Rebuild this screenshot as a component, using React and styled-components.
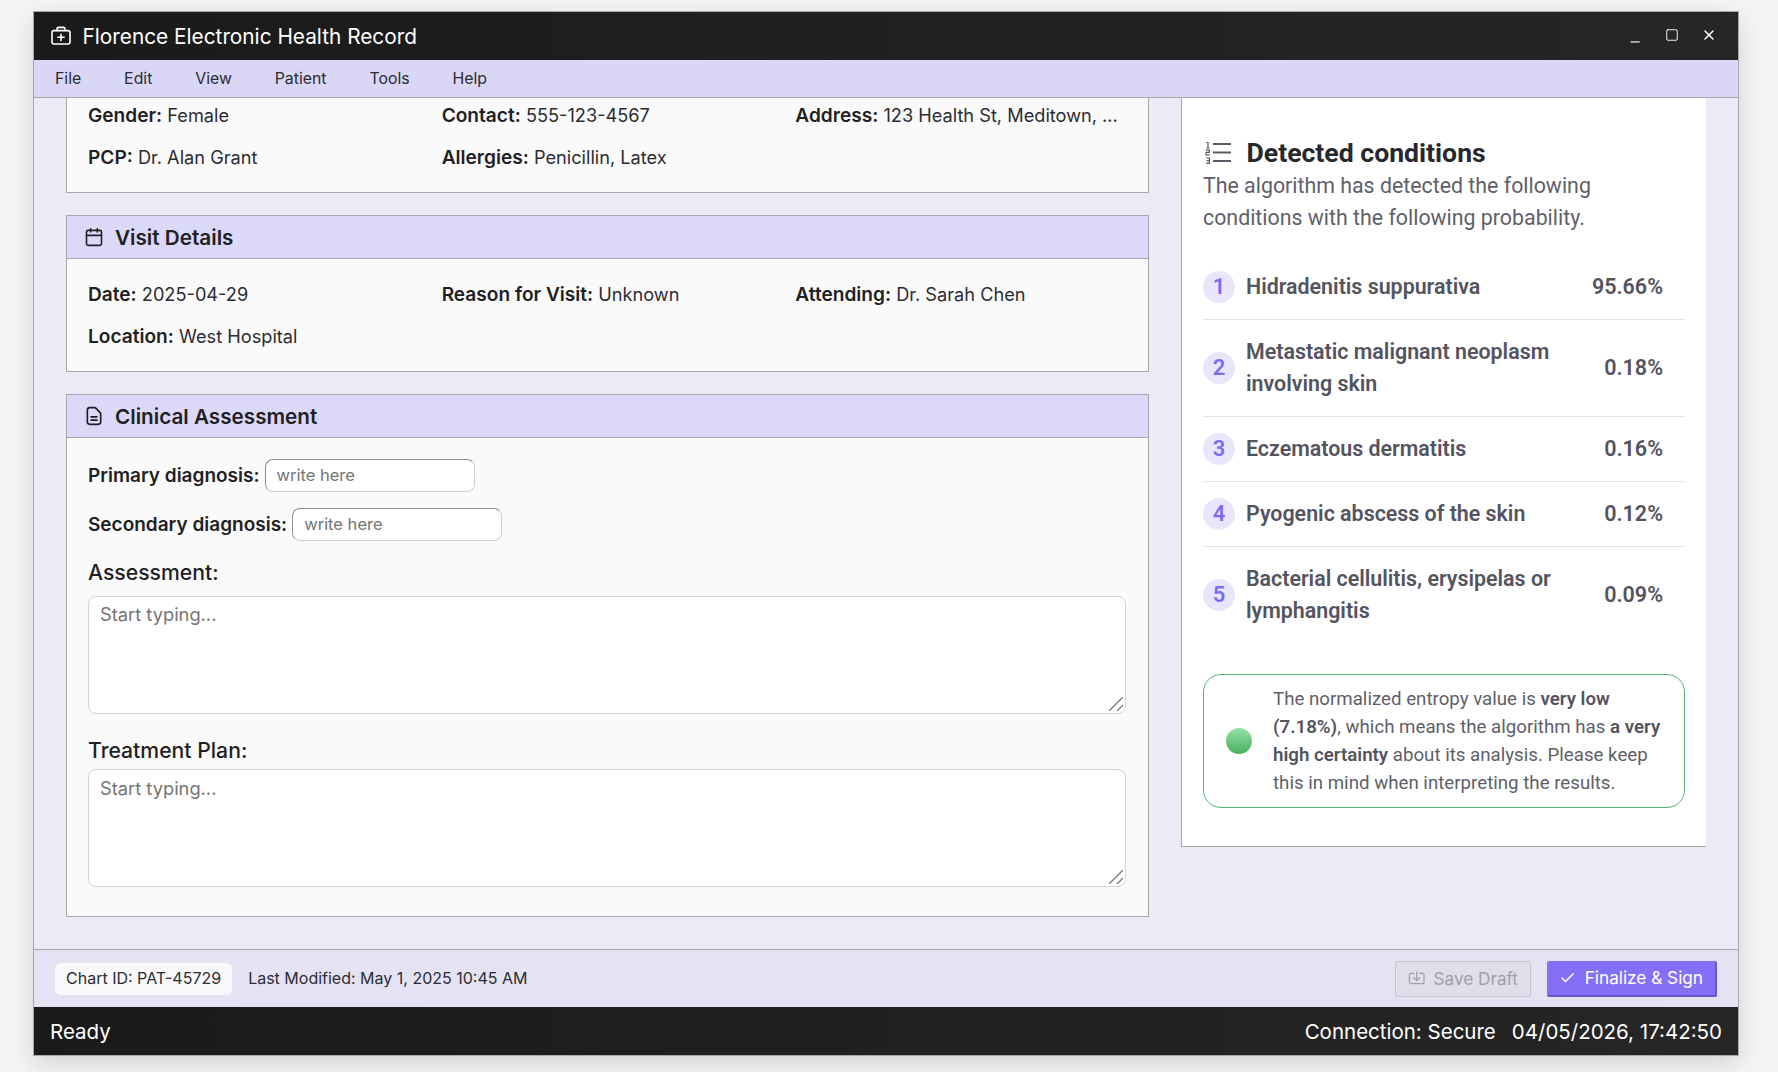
import styled, { createGlobalStyle } from "styled-components";
import { Calendar, Check, Import, Square, X } from "lucide-react";

const menus = ["File", "Edit", "View", "Patient", "Tools", "Help"];

const conditions = [
  { name: "Hidradenitis suppurativa", pct: "95.66%" },
  { name: "Metastatic malignant neoplasm involving skin", pct: "0.18%" },
  { name: "Eczematous dermatitis", pct: "0.16%" },
  { name: "Pyogenic abscess of the skin", pct: "0.12%" },
  { name: "Bacterial cellulitis, erysipelas or lymphangitis", pct: "0.09%" },
];

// lucide's medical briefcase has extra side lines, this one hasn't
const CaseIcon = () => (
  <svg width="20" height="20" viewBox="0 0 20 20" fill="none" stroke="currentColor" strokeWidth="1.6" strokeLinecap="round" strokeLinejoin="round">
    <rect x="1" y="4.6" width="18" height="13.4" rx="2" />
    <path d="M6 4.6V3a1.6 1.6 0 0 1 1.6-1.6h4.8A1.6 1.6 0 0 1 14 3v1.6" />
    <path d="M10 8.2v6.2M6.9 11.3h6.2" />
  </svg>
);

const NoteIcon = () => (
  <svg width="20" height="20" viewBox="0 0 24 24" fill="none" stroke="currentColor" strokeWidth="2" strokeLinecap="round" strokeLinejoin="round">
    <path d="M7 22a3 3 0 0 1-3-3V5a3 3 0 0 1 3-3h6.5L20 8.5V19a3 3 0 0 1-3 3z" />
    <path d="M8.5 13h7M8.5 17h7" />
  </svg>
);

const RankIcon = () => (
  <svg width="26" height="22" viewBox="0 0 26 22" fill="none" stroke="currentColor">
    <path d="M8 2h18M8 10.5h18M8 19h18" strokeWidth="2.2" />
    <path d="M1.5 .5H3V6M1.5 6h3M1 8.2h3.4v2.2H1v2.4h3.6M1 16h3.4v5.4H1M1.6 18.7h2.8" strokeWidth="1.2" />
  </svg>
);

const GripIcon = () => (
  <svg width="14" height="14" viewBox="0 0 14 14" stroke="#777" strokeWidth="1.3">
    <path d="M0 14 14 0M8 14l6-6" />
  </svg>
);

export default function App() {
  return (
    <>
      <GlobalStyle />
      <Window>
        <TitleBar>
          <TitleLeft>
            <CaseIcon />
            <span>Florence Electronic Health Record</span>
          </TitleLeft>
          <WinControls>
            <WinBtn className="min">_</WinBtn>
            <WinBtn>
              <Square size={14} strokeWidth={1.6} />
            </WinBtn>
            <WinBtn>
              <X size={16} strokeWidth={2.2} />
            </WinBtn>
          </WinControls>
        </TitleBar>
        <MenuBar>
          {menus.map((m) => (
            <MenuItem key={m}>{m}</MenuItem>
          ))}
        </MenuBar>
        <Main>
          <LeftCol>
            <Panel className="cut">
              <InfoGrid className="cut">
                <Info>
                  <b>Gender:</b> Female
                </Info>
                <Info>
                  <b>Contact:</b> 555-123-4567
                </Info>
                <Info>
                  <b>Address:</b> 123 Health St, Meditown, ...
                </Info>
                <Info>
                  <b>PCP:</b> Dr. Alan Grant
                </Info>
                <Info>
                  <b>Allergies:</b> Penicillin, Latex
                </Info>
              </InfoGrid>
            </Panel>
            <Panel>
              <PanelHead>
                <Calendar size={20} strokeWidth={1.9} />
                <span>Visit Details</span>
              </PanelHead>
              <InfoGrid>
                <Info>
                  <b>Date:</b> 2025-04-29
                </Info>
                <Info>
                  <b>Reason for Visit:</b> Unknown
                </Info>
                <Info>
                  <b>Attending:</b> Dr. Sarah Chen
                </Info>
                <Info>
                  <b>Location:</b> West Hospital
                </Info>
              </InfoGrid>
            </Panel>
            <Panel>
              <PanelHead>
                <NoteIcon />
                <span>Clinical Assessment</span>
              </PanelHead>
              <FormBody>
                <InlineField>
                  <b>Primary diagnosis:</b>
                  <TextInput placeholder="write here" />
                </InlineField>
                <InlineField className="second">
                  <b>Secondary diagnosis:</b>
                  <TextInput placeholder="write here" />
                </InlineField>
                <BlockLabel>Assessment:</BlockLabel>
                <AreaWrap>
                  <Area placeholder="Start typing..." />
                  <Grip>
                    <GripIcon />
                  </Grip>
                </AreaWrap>
                <BlockLabel className="plan">Treatment Plan:</BlockLabel>
                <AreaWrap>
                  <Area placeholder="Start typing..." />
                  <Grip>
                    <GripIcon />
                  </Grip>
                </AreaWrap>
              </FormBody>
            </Panel>
          </LeftCol>
          <Results>
            <ResultsHead>
              <RankIcon />
              <h2>Detected conditions</h2>
            </ResultsHead>
            <Lead>
              The algorithm has detected the following conditions with the
              following probability.
            </Lead>
            <CondList>
              {conditions.map((c, i) => (
                <CondRow key={c.name}>
                  <Num>{i + 1}</Num>
                  <CondName>{c.name}</CondName>
                  <Pct>{c.pct}</Pct>
                </CondRow>
              ))}
            </CondList>
            <Notice>
              <Dot />
              <p>
                The normalized entropy value is <b>very low (7.18%)</b>, which
                means the algorithm has <b>a very high certainty</b> about its
                analysis. Please keep this in mind when interpreting the
                results.
              </p>
            </Notice>
          </Results>
        </Main>
        <ActionBar>
          <ActionLeft>
            <Chip>Chart ID: PAT-45729</Chip>
            <Modified>Last Modified: May 1, 2025 10:45 AM</Modified>
          </ActionLeft>
          <ActionRight>
            <Btn className="draft">
              <Import size={19} strokeWidth={1.7} />
              Save Draft
            </Btn>
            <Btn className="sign">
              <Check size={18} strokeWidth={2} />
              Finalize &amp; Sign
            </Btn>
          </ActionRight>
        </ActionBar>
        <StatusBar>
          <span>Ready</span>
          <StatusRight>
            <span>Connection: Secure</span>
            <span>04/05/2026, 17:42:50</span>
          </StatusRight>
        </StatusBar>
      </Window>
    </>
  );
}

const GlobalStyle = createGlobalStyle`
  html, body {
    margin: 0;
    height: 100%;
    background: #f5f5f5;
    overflow: hidden;
  }
  * {
    box-sizing: border-box;
  }
  body {
    font-family: Inter, "Liberation Sans", sans-serif;
    color: #1f1f24;
  }
`;

const Window = styled.div`
  width: 1706px;
  height: 1045px;
  margin: 11px 0 0 33px;
  display: flex;
  flex-direction: column;
  border: 1px solid #a6a6ab;
  background: #eceaf6;
  box-shadow: 0 8px 26px rgba(0, 0, 0, 0.14);
`;

const TitleBar = styled.div`
  flex: 0 0 48px;
  display: flex;
  align-items: center;
  justify-content: space-between;
  padding: 0 21px 0 17px;
  background: linear-gradient(90deg, #1a1a1a, #262626);
  color: #fff;
`;

const TitleLeft = styled.div`
  display: flex;
  align-items: center;
  gap: 11.5px;
  font-size: 20.8px;
`;

const WinControls = styled.div`
  display: flex;
  align-items: center;
  gap: 21px;
`;

const WinBtn = styled.div`
  width: 16px;
  height: 18px;
  display: flex;
  align-items: center;
  justify-content: center;
  color: #fff;
  margin-top: -2px;

  &.min {
    font-size: 20px;
    color: #adadad;
    line-height: 18px;
    margin-top: -4px;
  }
`;

const MenuBar = styled.div`
  flex: 0 0 38px;
  display: flex;
  align-items: center;
  gap: 42.85px;
  padding: 0 21px 1px;
  background: #d9d6f6;
  border-bottom: 1px solid #a6a6ab;
`;

const MenuItem = styled.div`
  font-size: 15.85px;
  color: #2c2c33;
`;

const Main = styled.div`
  flex: 1;
  min-height: 0;
  display: flex;
  gap: 32px;
  padding: 0 32px;
  overflow: hidden;
`;

const LeftCol = styled.div`
  width: 1083px;
  flex: none;
  display: flex;
  flex-direction: column;
  gap: 22.5px;
`;

const Panel = styled.section`
  border: 1px solid #a6a6ab;
  background: #fafafa;

  &.cut {
    border-top: none;
  }
`;

const PanelHead = styled.div`
  height: 43px;
  display: flex;
  align-items: center;
  gap: 11px;
  padding: 0 17px;
  background: #dbd8f8;
  border-bottom: 1px solid #a6a6ab;
  font-size: 20.7px;
  font-weight: 600;
  color: #1f1f24;
`;

const InfoGrid = styled.div`
  display: grid;
  grid-template-columns: repeat(3, 1fr);
  column-gap: 22px;
  row-gap: 18px;
  padding: 22.5px 21px 23px;

  &.cut {
    padding: 5px 21px 22.5px;
  }
`;

const Info = styled.div`
  font-size: 18.2px;
  line-height: 24px;
  white-space: nowrap;
  color: #2c2c33;

  b {
    font-size: 19.1px;
    font-weight: 600;
    color: #1f1f24;
  }
`;

const FormBody = styled.div`
  padding: 20.5px 22px 28.5px 21px;
  display: flex;
  flex-direction: column;
`;

const InlineField = styled.label`
  display: flex;
  align-items: center;
  gap: 5px;
  font-size: 19px;

  b {
    font-weight: 600;
  }

  &.second {
    margin-top: 16px;
  }
`;

const TextInput = styled.input`
  width: 210px;
  height: 33px;
  padding: 0 11px 1px;
  border: 1px solid #cfcfcf;
  border-top-color: #8f8f8f;
  border-left-color: #8f8f8f;
  border-radius: 8px;
  background: #fff;
  font-family: inherit;
  font-size: 16.5px;
  outline: none;

  &::placeholder {
    color: #757575;
  }
`;

const BlockLabel = styled.div`
  margin-top: 19px;
  margin-bottom: 12px;
  font-size: 21.2px;
  line-height: 24px;
  font-weight: 500;

  &.plan {
    margin-top: 24px;
    margin-bottom: 7.5px;
  }
`;

const AreaWrap = styled.div`
  position: relative;
`;

const Grip = styled.div`
  position: absolute;
  right: 3px;
  bottom: 3px;
  width: 14px;
  height: 14px;
  line-height: 0;
  pointer-events: none;
`;

const Area = styled.textarea`
  display: block;
  width: 100%;
  height: 118px;
  padding: 6.5px 11px;
  border: 1px solid #d4d4d4;
  border-radius: 8px;
  background: #fff;
  font-family: inherit;
  font-size: 18.3px;
  line-height: 22px;
  outline: none;
  resize: none;

  &::placeholder {
    color: #757575;
  }
`;

const Results = styled.aside`
  width: 525px;
  height: 749px;
  flex: none;
  padding: 40px 21px 0;
  background: #fff;
  border-left: 1px solid #a6a6ab;
  border-bottom: 1px solid #a6a6ab;
  font-family: Roboto, "Liberation Sans", sans-serif;
`;

const ResultsHead = styled.div`
  display: flex;
  align-items: center;
  gap: 15.5px;
  padding-left: 2px;
  margin-bottom: 2px;
  color: #5c5c66;

  h2 {
    margin: 0;
    font-size: 26.6px;
    line-height: 30px;
    font-weight: 700;
    color: #27272d;
  }
`;

const Lead = styled.p`
  margin: 0 0 20.8px;
  font-size: 21.35px;
  line-height: 32px;
  font-weight: 400;
  color: #5f5f6a;
`;

const CondList = styled.div`
  display: flex;
  flex-direction: column;
`;

const CondRow = styled.div`
  display: flex;
  align-items: center;
  gap: 11px;
  padding: 16px 22px 16px 0;
  border-bottom: 1px solid #e2e2e6;

  &:last-child {
    border-bottom: none;
  }
`;

const Num = styled.div`
  width: 32px;
  height: 32px;
  flex: none;
  display: flex;
  align-items: center;
  justify-content: center;
  border-radius: 50%;
  background: #e9e6fb;
  color: #7c6cf5;
  font-size: 22px;
  font-weight: 600;
`;

const CondName = styled.div`
  flex: 1;
  font-size: 21.4px;
  line-height: 32px;
  font-weight: 600;
  color: #54545f;
`;

const Pct = styled.div`
  flex: none;
  margin-left: 20px;
  font-size: 21.5px;
  line-height: 32px;
  font-weight: 600;
  color: #54545f;
`;

const Notice = styled.div`
  margin-top: 31.5px;
  height: 134px;
  display: flex;
  align-items: center;
  gap: 21px;
  padding: 0 20px 0 22px;
  border: 1px solid #55b374;
  border-radius: 18px;

  p {
    margin: 0 0 1px;
    font-size: 18.7px;
    line-height: 28px;
    font-weight: 400;
    color: #5f5f6a;
  }

  b {
    font-weight: 600;
    color: #54545f;
  }
`;

const Dot = styled.div`
  width: 26px;
  height: 26px;
  flex: none;
  border-radius: 50%;
  background: linear-gradient(180deg, #94e4a8, #4aac5e);
`;

const ActionBar = styled.div`
  flex: 0 0 58px;
  display: flex;
  align-items: center;
  justify-content: space-between;
  padding: 0 21px;
  background: #e5e2f3;
  border-top: 1px solid #a6a6ab;
`;

const ActionLeft = styled.div`
  display: flex;
  align-items: center;
  gap: 16px;
  font-size: 16px;
  color: #2c2c33;
`;

const Chip = styled.div`
  height: 32px;
  padding: 0 11px 2px;
  display: flex;
  align-items: center;
  background: #f9f9fa;
  border-radius: 6px;
`;

const Modified = styled.span`
  padding-bottom: 2px;
`;

const ActionRight = styled.div`
  display: flex;
  align-items: center;
  gap: 16px;
`;

const Btn = styled.button`
  height: 36px;
  display: flex;
  align-items: center;
  gap: 7px;
  padding: 0 12px;
  border-radius: 2px;
  font-family: Inter, sans-serif;
  font-size: 17.2px;
  white-space: nowrap;

  &.draft {
    width: 136px;
    gap: 8px;
    background: #e0deea;
    border: 1px solid #c6c6cc;
    color: #a0a0a8;
  }
  &.sign {
    width: 170px;
    gap: 8.5px;
    background: #8470f6;
    border: none;
    border-right: 2px solid #6457c9;
    border-bottom: 2px solid #6457c9;
    color: #fff;
  }
`;

const StatusBar = styled.div`
  flex: 0 0 48px;
  display: flex;
  align-items: center;
  justify-content: space-between;
  padding: 0 16px;
  background: linear-gradient(90deg, #1a1a1a, #262626);
  color: #fff;
  font-family: Inter, sans-serif;
  font-size: 20.5px;
`;

const StatusRight = styled.div`
  display: flex;
  gap: 16px;
`;
